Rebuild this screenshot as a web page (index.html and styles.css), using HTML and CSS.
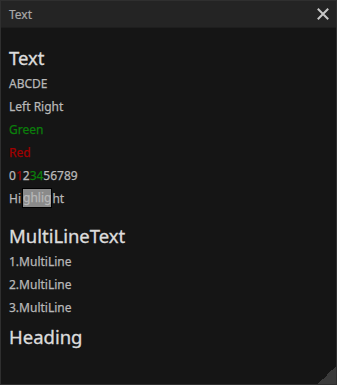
FILE: index.html
```html
<!DOCTYPE html>
<html>
<head>
<meta charset="utf-8">
<link rel="stylesheet" href="styles.css">
</head>
<body>
<div class="window">
  <div class="titlebar">
    <span class="title">Text</span>
    <svg class="close" width="12" height="12" viewBox="0 0 12 12"><path d="M1.5 1.5 L10.5 10.5 M10.5 1.5 L1.5 10.5" stroke="#c8c8c8" stroke-width="2" stroke-linecap="square"/></svg>
  </div>
  <div class="content">
    <div class="h h1">Text</div>
    <div class="line">ABCDE</div>
    <div class="line">Left Right</div>
    <div class="line green">Green</div>
    <div class="line red">Red</div>
    <div class="line">0<span class="red">1</span>2<span class="green">34</span>56789</div>
    <div class="line">Hi<span class="hl">ghlig</span>ht</div>
    <div class="h h2">MultiLineText</div>
    <div class="line">1.MultiLine</div>
    <div class="line">2.MultiLine</div>
    <div class="line">3.MultiLine</div>
    <div class="h h3">Heading</div>
  </div>
  <div class="grip"></div>
</div>
</body>
</html>
```
FILE: styles.css
```css
html, body {
  margin: 0;
  padding: 0;
  background: #151515;
}
.window {
  position: relative;
  width: 337px;
  height: 385px;
  box-sizing: border-box;
  border: 1px solid #2f2f2f;
  background: #151515;
  font-family: "Noto Sans", "Open Sans", sans-serif;
  overflow: hidden;
}
.titlebar {
  height: 26px;
  background: #242424;
  border-bottom: 1px solid #1e1e1e;
  display: flex;
  align-items: center;
  justify-content: space-between;
  padding: 0 7px 0 8px;
}
.title {
  font-size: 12px;
  color: #a8a8a8;
  -webkit-text-stroke: 0.2px #a8a8a8;
}
.close {
  display: block;
}
.content {
  display: flex;
  flex-direction: column;
  padding: 15px 8px 0 8px;
  color: #b8b8b8;
  font-size: 12px;
  -webkit-text-stroke: 0.25px currentColor;
}
.h {
  font-size: 18.5px;
  color: #dcdcdc;
  line-height: 29px;
  -webkit-text-stroke: 0.35px currentColor;
}
.h2 {
  margin-top: 11px;
}
.h3 {
  margin-top: 3px;
}
.line {
  line-height: 23px;
  height: 23px;
}
.green { color: #0b7f0b; }
.red { color: #a00000; }
.hl {
  display: inline-block;
  background: #8a8a8a;
  border: 1px solid #000;
  line-height: 18px;
  vertical-align: top;
  margin-top: 1px;
  margin-left: 1px;
}
.grip {
  position: absolute;
  right: 0;
  bottom: 0;
  width: 18px;
  height: 18px;
  background: linear-gradient(135deg, transparent 50%, #3a3a3a 50%);
}
```
